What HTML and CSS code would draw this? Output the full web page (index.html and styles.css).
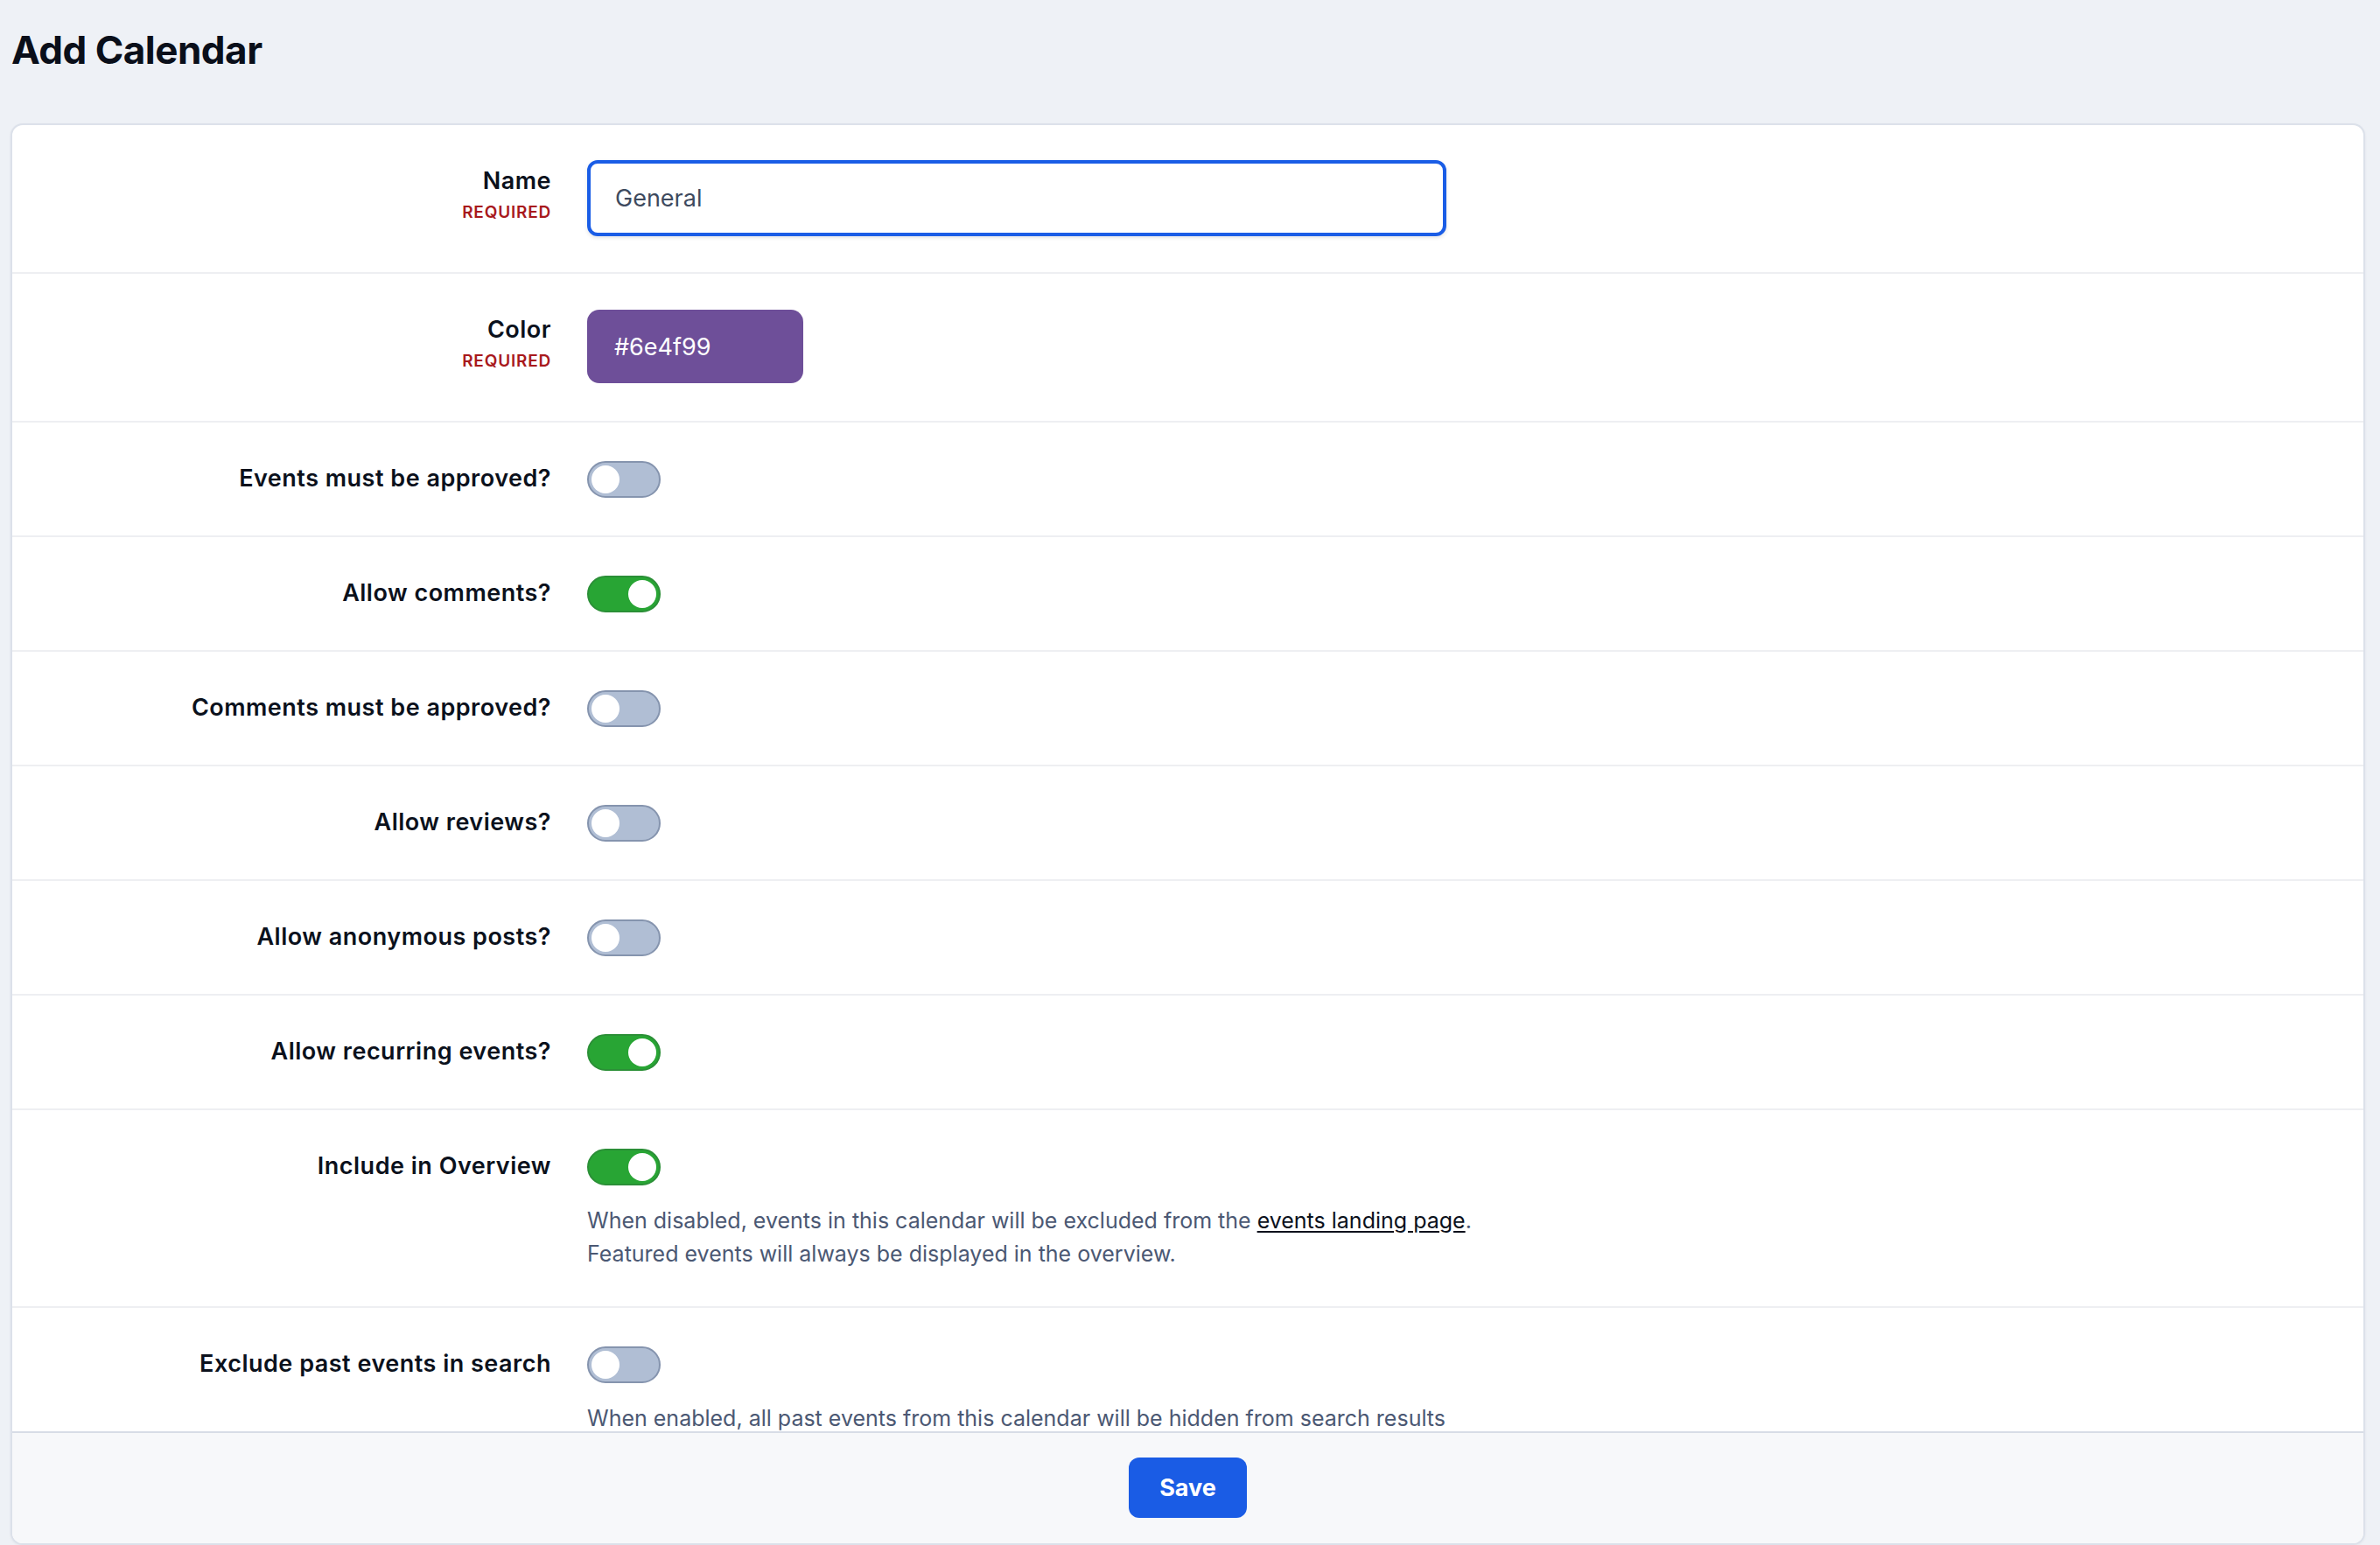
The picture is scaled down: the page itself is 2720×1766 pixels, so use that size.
FILE: index.html
```html
<!DOCTYPE html>
<html lang="en">
<head>
    <meta charset="UTF-8">
    <meta name="viewport" content="width=device-width, initial-scale=1.0">
    <title>Add Calendar</title>
    <link rel="stylesheet" href="styles.css">
</head>
<body>
    <header class="page-header">
        <h1>Add Calendar</h1>
    </header>

    <form class="card" id="calendarForm">
        <div class="card-body">
            <div class="field">
                <label class="field-label" for="name">
                    Name
                    <span class="required">Required</span>
                </label>
                <div class="field-control">
                    <input type="text" id="name" class="text-input" value="General">
                </div>
            </div>

            <div class="field">
                <label class="field-label" for="color">
                    Color
                    <span class="required">Required</span>
                </label>
                <div class="field-control">
                    <div class="swatch" id="color">#6e4f99</div>
                </div>
            </div>

            <div class="field">
                <label class="field-label">Events must be approved?</label>
                <div class="field-control">
                    <span class="toggle"><span class="knob"></span></span>
                </div>
            </div>

            <div class="field">
                <label class="field-label">Allow comments?</label>
                <div class="field-control">
                    <span class="toggle on"><span class="knob"></span></span>
                </div>
            </div>

            <div class="field">
                <label class="field-label">Comments must be approved?</label>
                <div class="field-control">
                    <span class="toggle"><span class="knob"></span></span>
                </div>
            </div>

            <div class="field">
                <label class="field-label">Allow reviews?</label>
                <div class="field-control">
                    <span class="toggle"><span class="knob"></span></span>
                </div>
            </div>

            <div class="field">
                <label class="field-label">Allow anonymous posts?</label>
                <div class="field-control">
                    <span class="toggle"><span class="knob"></span></span>
                </div>
            </div>

            <div class="field">
                <label class="field-label">Allow recurring events?</label>
                <div class="field-control">
                    <span class="toggle on"><span class="knob"></span></span>
                </div>
            </div>

            <div class="field">
                <label class="field-label">Include in Overview</label>
                <div class="field-control">
                    <span class="toggle on"><span class="knob"></span></span>
                    <p class="help">
                        When disabled, events in this calendar will be excluded from the <a href="#">events landing page</a>.<br>
                        Featured events will always be displayed in the overview.
                    </p>
                </div>
            </div>

            <div class="field">
                <label class="field-label">Exclude past events in search</label>
                <div class="field-control">
                    <span class="toggle"><span class="knob"></span></span>
                    <p class="help">When enabled, all past events from this calendar will be hidden from search results</p>
                </div>
            </div>
        </div>

        <div class="card-footer">
            <button type="submit" class="btn-primary">Save</button>
        </div>
    </form>
</body>
</html>
```

FILE: styles.css
```css
html, body {
    height: 100%;
}
body {
    margin: 0;
    padding: 0 17px 0 12px;
    box-sizing: border-box;
    font-family: 'Inter', 'Noto Sans', sans-serif;
    background: #eef1f6;
    color: #0b111c;
    display: flex;
    flex-direction: column;
    overflow: hidden;
}
.page-header {
    padding: 31px 0 57px 1px;
}
h1 {
    margin: 0;
    font-size: 44px;
    line-height: 53px;
    font-weight: 700;
    letter-spacing: -0.5px;
    color: #0a0f1a;
}
.card {
    flex: 1;
    min-height: 0;
    display: flex;
    flex-direction: column;
    background: #fff;
    border: 2px solid #dce1ea;
    border-radius: 14px;
    box-shadow: 0 1px 3px rgba(30, 41, 59, 0.06);
    overflow: hidden;
}
.card-body {
    flex: 1;
    min-height: 0;
    overflow: hidden;
}
.field {
    display: grid;
    grid-template-columns: 616px 1fr;
    column-gap: 41px;
    padding: 40px 0 41px;
    border-bottom: 2px solid #eeeff2;
}
.field-label {
    display: flex;
    flex-direction: column;
    align-items: flex-end;
    text-align: right;
    font-size: 27px;
    line-height: 48px;
    font-weight: 600;
    letter-spacing: 0.5px;
    color: #0b111c;
}
.required {
    font-size: 19px;
    line-height: 24px;
    font-weight: 600;
    letter-spacing: 0.8px;
    text-transform: uppercase;
    color: #a8191c;
}
.field-control {
    display: flex;
    flex-direction: column;
    align-items: flex-start;
}
.text-input {
    box-sizing: border-box;
    width: 982px;
    height: 87px;
    padding: 0 28px;
    border: 4px solid #1a5de6;
    border-radius: 12px;
    font-family: inherit;
    font-size: 27px;
    color: #3e4a5e;
    box-shadow: 0 2px 4px rgba(30, 41, 59, 0.12);
    outline: none;
}
.swatch {
    box-sizing: border-box;
    width: 247px;
    height: 84px;
    margin: 1px 0 2px;
    padding: 0 31px;
    display: flex;
    align-items: center;
    border-radius: 14px;
    background: #6e4f99;
    color: #fff;
    font-size: 27px;
}
.toggle {
    position: relative;
    box-sizing: border-box;
    display: block;
    width: 84px;
    height: 42px;
    margin-top: 4px;
    border: 2px solid #8594ae;
    border-radius: 21px;
    background: #b0bed4;
}
.toggle .knob {
    position: absolute;
    top: 3px;
    left: 3px;
    width: 32px;
    height: 32px;
    border-radius: 50%;
    background: #fff;
}
.toggle.on {
    background: #28a534;
    border-color: #2b8f37;
}
.toggle.on .knob {
    left: auto;
    right: 3px;
}
.help {
    margin: 21px 0 0;
    font-size: 25px;
    line-height: 38px;
    color: #4b5873;
}
.help a {
    color: #0b111c;
    text-decoration: underline;
    text-underline-offset: 3px;
}
.card-footer {
    display: flex;
    justify-content: center;
    padding: 28px 0 29px;
    border-top: 2px solid #d7dce6;
    background: #f7f8fa;
}
.btn-primary {
    width: 135px;
    height: 69px;
    border: none;
    border-radius: 12px;
    background: #1a5ce5;
    color: #fff;
    font-family: inherit;
    font-size: 27px;
    font-weight: 700;
    cursor: pointer;
}
```
